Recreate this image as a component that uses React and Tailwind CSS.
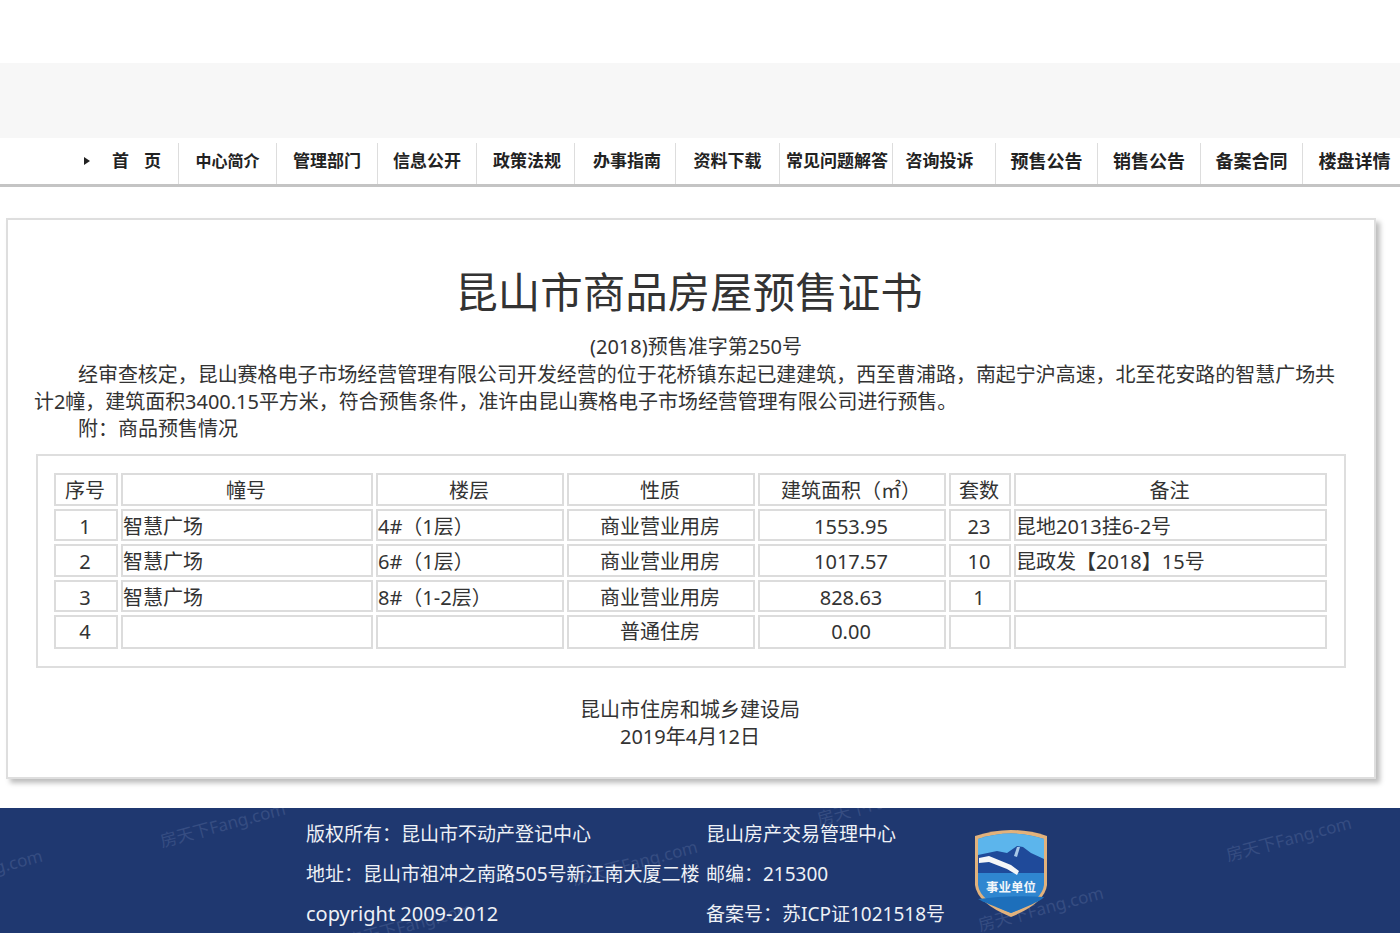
import React from 'react';

const FONT = "font-['Noto_Sans','Noto_Sans_CJK_SC',sans-serif]";

const navItems = [
  { label: '中心简介', w: 'w-[98px]', size: 'text-[16px]' },
  { label: '管理部门', w: 'w-[101px]', size: 'text-[17px]' },
  { label: '信息公开', w: 'w-[99px]', size: 'text-[17px]' },
  { label: '政策法规', w: 'w-[98px]', size: 'text-[17px]', pad: 'pl-[3px]' },
  { label: '办事指南', w: 'w-[101px]', size: 'text-[17px]', pad: 'pl-[4px]' },
  { label: '资料下载', w: 'w-[104px]', size: 'text-[17px]' },
  { label: '常见问题解答', w: 'w-[113px]', size: 'text-[17px]', pad: 'pl-[2px]' },
  { label: '咨询投诉', w: 'w-[103px]', size: 'text-[17px]', pad: 'pr-[9px]' },
  { label: '预售公告', w: 'w-[102px]', size: 'text-[18px]' },
  { label: '销售公告', w: 'w-[103px]', size: 'text-[18px]' },
  { label: '备案合同', w: 'w-[102px]', size: 'text-[18px]' },
  { label: '楼盘详情', w: 'w-[98px]', size: 'text-[18px]', pad: 'pl-[6px]' },
];

const rows = [
  { h: 'pt-[3px] leading-[25px]', c: ['1', '智慧广场', '4#（1层）', '商业营业用房', '1553.95', '23', '昆地2013挂6-2号'] },
  { h: 'pt-[2px] leading-[27px]', c: ['2', '智慧广场', '6#（1层）', '商业营业用房', '1017.57', '10', '昆政发【2018】15号'] },
  { h: 'pt-[3px] leading-[25px]', c: ['3', '智慧广场', '8#（1-2层）', '商业营业用房', '828.63', '1', ''] },
  { h: 'leading-[30px]', c: ['4', '', '', '普通住房', '0.00', '', ''] },
];

const headers = ['序号', '幢号', '楼层', '性质', '建筑面积（㎡）', '套数', '备注'];
const colWidths = ['w-[64px]', 'w-[252px]', 'w-[188px]', 'w-[188px]', 'w-[188px]', 'w-[62px]', 'w-[313px]'];

const cell = 'border-2 border-[#dcdcdc] p-0 font-normal text-[20px] text-[#333]';
const centered = 'pr-[2px] text-center';

function Watermark({ className }) {
  return (
    <span className={`absolute -rotate-[15deg] whitespace-nowrap text-[17px] leading-none text-[#364d82] ${className}`}>
      房天下Fang.com
    </span>
  );
}

function Badge() {
  return (
    <svg width="76" height="92" viewBox="0 0 76 92" className="shrink-0">
      <path d="M2 9 Q38 -3 74 9 L74 58 Q72 76 38 90 Q4 76 2 58 Z" fill="#e2b27c" />
      <path d="M5 12 Q38 1 71 12 L71 58 Q69 74 38 86 Q7 74 5 58 Z" fill="#2f86d0" />
      <path d="M5 12 Q38 1 71 12 L71 42 L5 42 Z" fill="#5cb5ec" />
      <path d="M5 28 L24 24 L34 26 L44 19 L50 20 L58 26 L71 32 L71 46 L5 46 Z" fill="#1f4a9a" />
      <path d="M6 31 L16 29 L38 38 L46 44 L44 48 L34 42 L16 35 L6 36 Z" fill="#f4f6f8" />
      <path d="M41 29 L44 20 L47 20 L44 30 Z" fill="#a8c8e8" />
      <path d="M5 72 Q38 68 71 70 Q69 74 38 86 Q12 76 5 72 Z" fill="#1d6fbb" />
      <text x="38" y="65" textAnchor="middle" fontSize="12.5" fontWeight="700" fill="#f2f6fa" fontFamily="'Noto Sans CJK SC', sans-serif">事业单位</text>
    </svg>
  );
}

export default function App() {
  return (
    <div className={`${FONT} w-[1400px] h-[933px] overflow-hidden bg-white`}>
      <div className="h-[63px] bg-white" />
      <div className="h-[75px] bg-[#f7f7f7]" />

      <nav className="flex h-[49px] bg-white border-b-[3px] border-[#c4c4c4] pl-[80px]">
        <div className="flex w-[98px] items-center text-[17px] font-bold text-[#222]">
          <span className="ml-[4px] mr-[22px] h-0 w-0 border-y-[4px] border-l-[6px] border-y-transparent border-l-[#222]" />
          <span>首</span>
          <span className="ml-[15px]">页</span>
        </div>
        {navItems.map((item) => (
          <div
            key={item.label}
            className={`flex ${item.w} ${item.size} ${item.pad || ''} mt-[5px] shrink-0 items-center justify-center whitespace-nowrap border-l border-[#dddddd] pb-[5px] font-bold text-[#222]`}
          >
            {item.label}
          </div>
        ))}
      </nav>

      <main className="ml-[6px] mt-[31px] h-[561px] w-[1370px] border-2 border-[#dedede] bg-white px-[28px] text-[#333] shadow-[4px_4px_5px_#bdbdbd]">
        <h1 className="mt-[40px] pr-[4px] text-center text-[42.5px] font-normal leading-[64px] text-[#333]">昆山市商品房屋预售证书</h1>
        <p className="mt-[9px] pl-[10px] text-center text-[20px] leading-[27px]">(2018)预售准字第250号</p>
        <p className="-ml-[2px] -mr-[2px] pt-[1px] text-[19.97px] leading-[27px] indent-[44px]">
          经审查核定，昆山赛格电子市场经营管理有限公司开发经营的位于花桥镇东起已建建筑，西至曹浦路，南起宁沪高速，北至花安路的智慧广场共计2幢，建筑面积3400.15平方米，符合预售条件，准许由昆山赛格电子市场经营管理有限公司进行预售。
        </p>
        <p className="-ml-[2px] text-[20px] leading-[27px] indent-[44px]">附：商品预售情况</p>

        <div className="mt-[12px] h-[214px] w-[1310px] border-2 border-[#dedede] px-[13px] pt-[14px]">
          <table className="w-[1279px] table-fixed border-separate border-spacing-x-[3px] border-spacing-y-[3px]">
            <thead>
              <tr>
                {headers.map((h, i) => (
                  <th key={h} className={`${cell} ${colWidths[i]} ${centered} pt-[3px] leading-[26px]`}>{h}</th>
                ))}
              </tr>
            </thead>
            <tbody>
              {rows.map(({ h, c }) => (
                <tr key={c[0]}>
                  <td className={`${cell} ${h} ${centered}`}>{c[0]}</td>
                  <td className={`${cell} ${h}`}>{c[1]}</td>
                  <td className={`${cell} ${h}`}>{c[2]}</td>
                  <td className={`${cell} ${h} ${centered}`}>{c[3]}</td>
                  <td className={`${cell} ${h} ${centered}`}>{c[4]}</td>
                  <td className={`${cell} ${h} ${centered}`}>{c[5]}</td>
                  <td className={`${cell} ${h}`}>{c[6]}</td>
                </tr>
              ))}
            </tbody>
          </table>
        </div>

        <div className="mt-[28px] pr-[2px] text-center text-[20px] leading-[27px]">
          <p>昆山市住房和城乡建设局</p>
          <p>2019年4月12日</p>
        </div>
      </main>

      <footer className="relative mt-[29px] flex h-[125px] overflow-hidden bg-[#1f3870] pl-[306px] pt-[6px] text-[19px] leading-[40px] text-[#eef1f6]">
        <Watermark className="left-[158px] top-[8px]" />
        <Watermark className="-left-[85px] top-[55px]" />
        <Watermark className="left-[570px] top-[46px]" />
        <Watermark className="left-[815px] -top-[14px]" />
        <Watermark className="left-[1224px] top-[22px]" />
        <Watermark className="left-[976px] top-[92px]" />
        <Watermark className="left-[345px] top-[108px]" />
        <div className="relative w-[400px] shrink-0 whitespace-nowrap">
          <p>版权所有：昆山市不动产登记中心</p>
          <p>地址：昆山市祖冲之南路505号新江南大厦二楼</p>
          <p className="text-[20px]">copyright 2009-2012</p>
        </div>
        <div className="relative w-[267px] shrink-0 whitespace-nowrap">
          <p>昆山房产交易管理中心</p>
          <p>邮编：215300</p>
          <p>备案号：苏ICP证1021518号</p>
        </div>
        <div className="relative mt-[13px]">
          <Badge />
        </div>
      </footer>
    </div>
  );
}
